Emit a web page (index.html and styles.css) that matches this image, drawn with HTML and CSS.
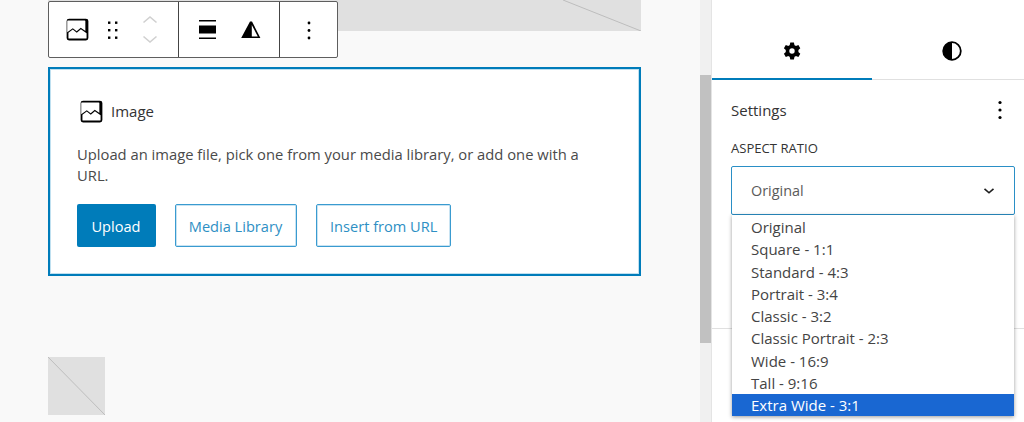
FILE: index.html
```html
<!DOCTYPE html>
<html lang="en">
<head>
<meta charset="utf-8">
<title>Image block</title>
<link rel="stylesheet" href="styles.css">
</head>
<body>
<div class="app">
  <main class="canvas">
    <div class="placeholder-top">
      <svg class="diag" viewBox="0 0 593 31" preserveAspectRatio="none"><line x1="515" y1="0" x2="593" y2="31"/></svg>
    </div>
    <div class="toolbar">
      <div class="tb-group tb-first">
        <button class="tb-btn tb-image"><svg width="29" height="29" viewBox="0 0 24 24"><path d="M19 3H5a2 2 0 0 0-2 2v14a2 2 0 0 0 2 2h14a2 2 0 0 0 2-2V5a2 2 0 0 0-2-2Zm.5 16a.5.5 0 0 1-.5.5H5a.5.5 0 0 1-.5-.5v-4.300l3.600-2.600 3.300 2.600 3.400-2.900 4.700 3.400V19Zm0-5.100-4.800-3.400-3.400 2.900-3.200-2.500-4.600 3.300V5a.5.5 0 0 1 .5-.5h14a.5.5 0 0 1 .5.5v8.900Z"/></svg></button>
        <span class="tb-btn tb-drag"><svg width="18" height="24" viewBox="0 0 18 24"><rect x="4" y="3.500" width="2.400" height="2.400"/><rect x="11" y="3.500" width="2.400" height="2.400"/><rect x="4" y="11" width="2.400" height="2.400"/><rect x="11" y="11" width="2.400" height="2.400"/><rect x="4" y="18.500" width="2.400" height="2.400"/><rect x="11" y="18.500" width="2.400" height="2.400"/></svg></span>
        <span class="tb-mover">
          <svg width="16" height="9" viewBox="0 0 16 9"><path d="M1.500 7.500 8 2l6.500 5.500"/></svg>
          <svg width="16" height="9" viewBox="0 0 16 9"><path d="M1.500 1.500 8 7l6.500-5.500"/></svg>
        </span>
      </div>
      <div class="tb-group tb-second">
        <button class="tb-btn"><svg width="20" height="22" viewBox="0 0 20 22"><path d="M1 1h17v1.600H1zM1 6.500h17v8H1zM1 18.500h17v1.600H1z"/></svg></button>
        <button class="tb-btn"><svg width="22" height="20" viewBox="0 0 22 20"><path d="M10 1.500 1.200 18H20.400L12 1.500Zm1.800 3.600 6 11.300h-6Z" fill-rule="evenodd"/></svg></button>
      </div>
      <div class="tb-group tb-third">
        <button class="tb-btn"><svg width="6" height="20" viewBox="0 0 6 20"><circle cx="3" cy="3" r="1.400"/><circle cx="3" cy="10.500" r="1.400"/><circle cx="3" cy="18" r="1.400"/></svg></button>
      </div>
    </div>

    <section class="image-block">
      <div class="block-title">
        <svg width="29" height="29" viewBox="0 0 24 24"><path d="M19 3H5a2 2 0 0 0-2 2v14a2 2 0 0 0 2 2h14a2 2 0 0 0 2-2V5a2 2 0 0 0-2-2Zm.5 16a.5.5 0 0 1-.5.5H5a.5.5 0 0 1-.5-.5v-4.300l3.600-2.600 3.300 2.600 3.400-2.900 4.700 3.400V19Zm0-5.100-4.800-3.400-3.400 2.900-3.200-2.500-4.600 3.300V5a.5.5 0 0 1 .5-.5h14a.5.5 0 0 1 .5.5v8.900Z"/></svg>
        <span>Image</span>
      </div>
      <p class="block-desc">Upload an image file, pick one from your media library, or add one with a URL.</p>
      <div class="block-actions">
        <button class="btn btn-primary">Upload</button>
        <button class="btn btn-outline btn-media">Media Library</button>
        <button class="btn btn-outline">Insert from URL</button>
      </div>
    </section>

    <div class="placeholder-small">
      <svg class="diag" viewBox="0 0 58 58" preserveAspectRatio="none"><line x1="0" y1="0" x2="58" y2="58"/></svg>
    </div>
  </main>

  <div class="scrollbar"><div class="scroll-thumb"></div></div>

  <aside class="sidebar">
    <div class="tabs">
      <button class="tab tab-active"><svg width="24" height="24" viewBox="0 0 24 24"><path fill-rule="evenodd" d="m10.300 2.600-.6 2.600c-.5.2-1 .4-1.400.7L5.800 5 3.900 8.300l1.900 1.800a7 7 0 0 0 0 1.800L3.900 13.700 5.800 17l2.500-.9c.4.3.9.5 1.400.7l.6 2.600h3.600l.6-2.600c.5-.2 1-.4 1.400-.7l2.500.9 1.900-3.300-1.900-1.800a7 7 0 0 0 0-1.800l1.900-1.800L18.400 5l-2.500.9c-.4-.3-.9-.5-1.400-.7l-.6-2.600ZM12 8.300a2.700 2.700 0 1 1 0 5.400 2.700 2.700 0 0 1 0-5.400Z" transform="translate(0 1)"/></svg></button>
      <button class="tab"><svg width="24" height="24" viewBox="0 0 24 24"><path fill-rule="evenodd" d="M12 2.300a9.700 9.700 0 1 0 0 19.400 9.700 9.700 0 0 0 0-19.400Zm0 1.800a7.900 7.900 0 0 1 0 15.800Z"/></svg></button>
    </div>
    <div class="panel">
      <div class="panel-head">
        <h2>Settings</h2>
        <svg width="6" height="20" viewBox="0 0 6 20"><circle cx="3" cy="2.500" r="1.600"/><circle cx="3" cy="10" r="1.600"/><circle cx="3" cy="17.500" r="1.600"/></svg>
      </div>
      <label class="field-label">ASPECT RATIO</label>
      <div class="select-wrap">
        <div class="select-box">
          <span>Original</span>
          <svg width="12" height="8" viewBox="0 0 12 8"><path d="M1.500 1.800 6 5.800l4.500-4"/></svg>
        </div>
        <ul class="dropdown">
          <li>Original</li>
          <li>Square - 1:1</li>
          <li>Standard - 4:3</li>
          <li>Portrait - 3:4</li>
          <li>Classic - 3:2</li>
          <li>Classic Portrait - 2:3</li>
          <li>Wide - 16:9</li>
          <li>Tall - 9:16</li>
          <li class="selected">Extra Wide - 3:1</li>
        </ul>
      </div>
    </div>
    <div class="panel-rule"></div>
  </aside>
</div>
</body>
</html>
```

FILE: styles.css
```css
* { box-sizing: border-box; }
html, body { margin: 0; height: 100%; }
body {
  font-family: "Open Sans", "Noto Sans", sans-serif;
  color: #1e1e1e;
  background: #f9f9f9;
  overflow: hidden;
}
button { font: inherit; background: none; border: 0; padding: 0; color: inherit; }
svg { display: block; }

.app { display: flex; height: 422px; }

/* canvas */
.canvas {
  position: relative;
  width: 700px;
  flex: none;
  padding-left: 48px;
  background: #f9f9f9;
}
.placeholder-top {
  width: 593px;
  height: 31px;
  background: #e0e0e0;
  margin-bottom: 36px;
}
.diag { width: 100%; height: 100%; }
.diag line { stroke: #bdbdbd; stroke-width: 1; }

.toolbar {
  position: absolute;
  left: 48px;
  top: 1px;
  width: 290px;
  height: 57px;
  display: flex;
  background: #fff;
  border: 1px solid #5e5e5e;
  border-radius: 2px;
}
.tb-group { display: flex; align-items: center; border-right: 1px solid #444; }
.tb-group:last-child { border-right: 0; }
.tb-first { width: 130px; padding-left: 14px; }
.tb-second { width: 101px; padding-left: 19px; gap: 22px; }
.tb-third { flex: 1; padding-left: 26px; }
.tb-btn { display: flex; align-items: center; justify-content: center; }
.tb-drag { margin-left: 12px; }
.tb-mover {
  margin-left: 19.500px;
  display: flex;
  flex-direction: column;
  gap: 11px;
}
.tb-mover path { fill: none; stroke: #d0d0d0; stroke-width: 1.600; }

/* image block */
.image-block {
  width: 593px;
  height: 209px;
  background: #fff;
  border: 2px solid #007cba;
  box-shadow: inset 0 0 0 1px #bfe0f0;
  padding: 28px 27px 0;
  margin-bottom: 81px;
}
.block-title {
  display: flex;
  align-items: center;
  gap: 5px;
  height: 28px;
  font-size: 15px;
  font-weight: 500;
  color: #333;
}
.block-desc {
  margin: 19px 0 0;
  max-width: 510px;
  font-size: 14.780px;
  line-height: 21px;
  color: #4a4a4a;
}
.block-actions { display: flex; margin-top: 18px; margin-left: -.5px; }
.btn {
  height: 43px;
  border-radius: 2px;
  font-size: 14.600px;
}
.btn-primary { width: 79px; background: #007cba; color: #fff; margin-right: 19px; }
.btn-outline {
  background: #fff;
  border: 1px solid #3a9bd0;
  box-shadow: inset 0 0 0 1px rgba(74,163,211,.3);
  color: #2e8fc4;
  padding: 0 13px;
}
.btn-media { width: 122px; margin-right: 19.500px; }

.placeholder-small { width: 57px; height: 58px; background: #e0e0e0; }

/* scrollbar */
.scrollbar { width: 12px; flex: none; background: #f0f0f0; padding-top: 75px; border-right: 1px solid #e4e4e4; }
.scroll-thumb { width: 11px; height: 268px; background: #c1c1c1; }

/* sidebar */
.sidebar {
  position: relative;
  flex: 1;
  min-width: 0;
  background: #fff;
  overflow: hidden;
}
.tabs { display: flex; height: 80px; border-bottom: 1px solid #e0e0e0; }
.tab { width: 160px; flex: none; display: flex; align-items: center; justify-content: center; padding-top: 22px; }
.tab-active { box-shadow: inset 0 -2px 0 #007cba; margin-bottom: -1px; }
.panel { padding: 0 9px 0 19px; }
.panel-head {
  display: flex;
  justify-content: space-between;
  align-items: center;
  height: 60px;
  padding: 0 12px 0 0;
}
.panel-head h2 { margin: 0; font-size: 15px; font-weight: 500; color: #333; }
.field-label { display: block; font-size: 13.100px; line-height: 18px; color: #333; margin-top: -1px; }
.select-wrap { position: relative; margin-top: 9px; }
.select-box {
  height: 49px;
  display: flex;
  align-items: center;
  justify-content: space-between;
  padding: 0 19px;
  border: 1px solid #2a8fc6;
  border-radius: 2px;
  font-size: 14.400px;
  color: #5a5a5a;
}
.select-box path { fill: none; stroke: #1e1e1e; stroke-width: 1.600; }
.dropdown {
  position: absolute;
  left: 1px;
  right: 1px;
  top: 49px;
  margin: 0;
  padding: 1px 0 0;
  list-style: none;
  background: #fff;
  box-shadow: 0 1px 4px rgba(0,0,0,.4);
  font-size: 15px;
  color: #444;
}
.dropdown li { height: 22.250px; line-height: 22.250px; padding-left: 19px; }
.dropdown .selected { background: #1967d2; color: #fff; }
.panel-rule { margin-top: 113px; border-top: 1px solid #e0e0e0; }
```
